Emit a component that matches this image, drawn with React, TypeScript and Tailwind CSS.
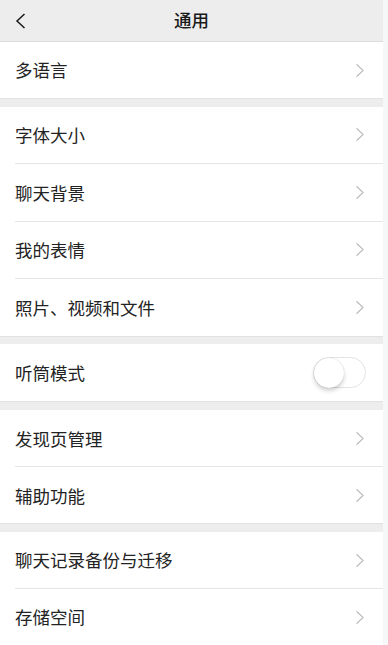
import React from 'react';

const font = { fontFamily: '"Noto Sans CJK SC", "Noto Sans", sans-serif' };

const Chevron = () => (
  <svg width="10" height="15" viewBox="0 0 10 15" fill="none" className="shrink-0">
    <path d="M1.5 1.2 L8 7.5 L1.5 13.8" stroke="#bdbdbd" strokeWidth="1.2" strokeLinejoin="miter" />
  </svg>
);

const Row = ({ label, h = 'h-[56px]', divider = false, toggle = false }: { label: string; h?: string; divider?: boolean; toggle?: boolean }) => (
  <div className="relative bg-white">
    <div className={`${h} flex items-center justify-between pl-[15px] pr-[18px]`}>
      <span className="text-[17.5px] text-[#232323] leading-none">{label}</span>
      {toggle ? (
        <div className="w-[53px] h-[31px] rounded-full border border-[#e3e3e3] bg-white flex items-center mr-[-1px]">
          <div className="w-[30px] h-[30px] rounded-full bg-white shadow-[0_3px_4px_rgba(0,0,0,0.18),0_0_1px_rgba(0,0,0,0.2)]" />
        </div>
      ) : (
        <Chevron />
      )}
    </div>
    {divider && <div className="ml-[15px] h-px bg-[#e6e6e6]" />}
  </div>
);

const Gap = ({ h = 'h-[9px]' }: { h?: string }) => <div className={`${h} bg-[#ededed] border-t border-[#e2e2e2]`} />;

export default function App() {
  return (
    <div className="flex w-[388px] h-[645px] overflow-hidden bg-[#f6f7f9]" style={font}>
      <div className="w-[383px] flex flex-col bg-[#ededed]">
        <div className="h-[42px] flex items-center relative border-b border-[#dcdcdc] shrink-0">
          <svg width="12" height="16" viewBox="0 0 12 16" fill="none" className="ml-[14px]">
            <path d="M10.5 1 L3 8 L10.5 15" stroke="#1a1a1a" strokeWidth="1.5" />
          </svg>
          <span className="absolute left-0 right-0 text-center text-[17.5px] font-medium text-[#1a1a1a]">通用</span>
        </div>
        <Row label="多语言" />
        <Gap />
        <Row label="字体大小" h="h-[56.5px]" divider />
        <Row label="聊天背景" h="h-[56.5px]" divider />
        <Row label="我的表情" h="h-[56.5px]" divider />
        <Row label="照片、视频和文件" h="h-[56.5px]" />
        <Gap />
        <Row label="听筒模式" h="h-[57px]" toggle />
        <Gap h="h-[10px]" />
        <Row label="发现页管理" divider />
        <Row label="辅助功能" />
        <Gap />
        <Row label="聊天记录备份与迁移" divider />
        <Row label="存储空间" />
      </div>
    </div>
  );
}
